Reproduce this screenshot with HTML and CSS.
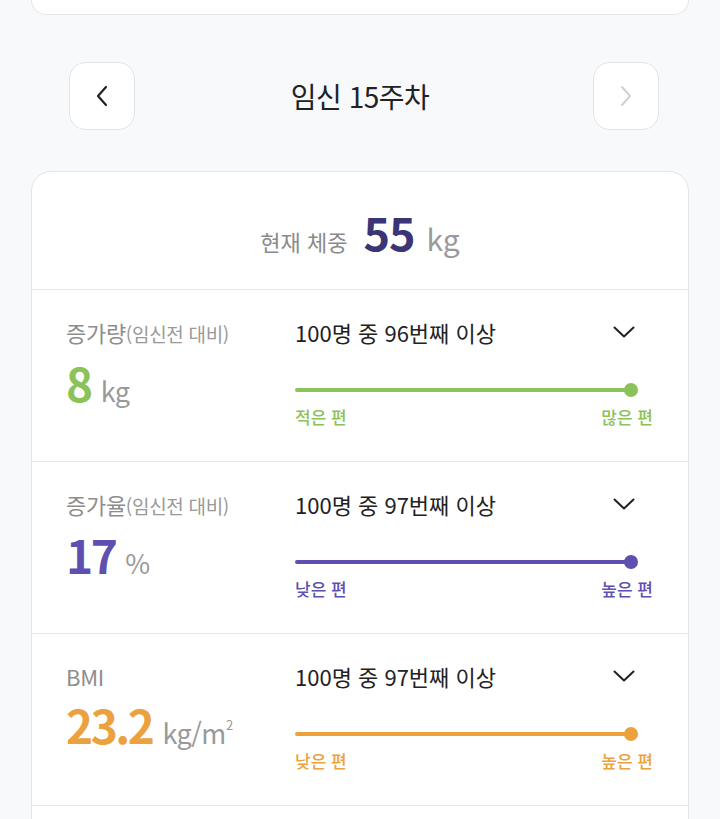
FILE: index.html
```html
<!DOCTYPE html>
<html lang="ko">
<head>
<meta charset="utf-8">
<title>임신 15주차</title>
<link rel="stylesheet" href="styles.css">
</head>
<body>
<div class="page">
  <div class="top-card"></div>

  <div class="week-nav">
    <button class="nav-btn" aria-label="이전">
      <svg width="14" height="22" viewBox="0 0 14 22"><path d="M11 2 L3 11 L11 20" fill="none" stroke="#222" stroke-width="2.2" stroke-linecap="round" stroke-linejoin="round"/></svg>
    </button>
    <div class="week-title">임신 15주차</div>
    <button class="nav-btn disabled" aria-label="다음">
      <svg width="14" height="22" viewBox="0 0 14 22"><path d="M3 2 L11 11 L3 20" fill="none" stroke="#cfd1d4" stroke-width="2" stroke-linecap="round" stroke-linejoin="round"/></svg>
    </button>
  </div>

  <div class="card">
    <div class="current">
      <span class="current-label">현재 체중</span>
      <span class="current-value">55</span>
      <span class="current-unit">kg</span>
    </div>

    <div class="row green">
      <div class="left">
        <div class="label">증가량<small>(임신전 대비)</small></div>
        <div class="value"><b>8</b><span class="unit">kg</span></div>
      </div>
      <div class="right">
        <div class="rank">
          <span>100명 중 96번째 이상</span>
          <svg class="chev" width="22" height="12" viewBox="0 0 22 12"><path d="M1.5 1.5 L11 10.5 L20.5 1.5" fill="none" stroke="#222" stroke-width="2" stroke-linecap="round" stroke-linejoin="round"/></svg>
        </div>
        <div class="bar"><div class="line"></div><div class="dot"></div></div>
        <div class="ends"><span>적은 편</span><span>많은 편</span></div>
      </div>
    </div>

    <div class="row purple">
      <div class="left">
        <div class="label">증가율<small>(임신전 대비)</small></div>
        <div class="value"><b>17</b><span class="unit">%</span></div>
      </div>
      <div class="right">
        <div class="rank">
          <span>100명 중 97번째 이상</span>
          <svg class="chev" width="22" height="12" viewBox="0 0 22 12"><path d="M1.5 1.5 L11 10.5 L20.5 1.5" fill="none" stroke="#222" stroke-width="2" stroke-linecap="round" stroke-linejoin="round"/></svg>
        </div>
        <div class="bar"><div class="line"></div><div class="dot"></div></div>
        <div class="ends"><span>낮은 편</span><span>높은 편</span></div>
      </div>
    </div>

    <div class="row orange">
      <div class="left">
        <div class="label">BMI</div>
        <div class="value"><b>23.2</b><span class="unit">kg/m<sup>2</sup></span></div>
      </div>
      <div class="right">
        <div class="rank">
          <span>100명 중 97번째 이상</span>
          <svg class="chev" width="22" height="12" viewBox="0 0 22 12"><path d="M1.5 1.5 L11 10.5 L20.5 1.5" fill="none" stroke="#222" stroke-width="2" stroke-linecap="round" stroke-linejoin="round"/></svg>
        </div>
        <div class="bar"><div class="line"></div><div class="dot"></div></div>
        <div class="ends"><span>낮은 편</span><span>높은 편</span></div>
      </div>
    </div>

    <div class="row empty"></div>
  </div>
</div>
</body>
</html>
```

FILE: styles.css
```css
* { box-sizing: border-box; }
html, body {
  margin: 0;
  padding: 0;
  background: #f7f9fb;
}
body {
  font-family: "Noto Sans CJK KR", "Noto Sans", sans-serif;
  color: #222;
}
.page {
  padding: 0 31px;
}
.top-card {
  height: 15px;
  background: #fff;
  border: 1px solid #e3e5e8;
  border-top: none;
  border-radius: 0 0 20px 20px;
}
.week-nav {
  display: grid;
  grid-template-columns: 66px 1fr 66px;
  align-items: center;
  margin: 47px 30px 0 38px;
}
.nav-btn {
  width: 66px;
  height: 68px;
  background: #fff;
  border: 1px solid #e2e4e7;
  border-radius: 17px;
  display: flex;
  align-items: center;
  justify-content: center;
  padding: 0;
}
.week-title {
  text-align: center;
  font-size: 28px;
  line-height: 36px;
  letter-spacing: -0.5px;
  color: #222;
  padding-right: 8px;
}
.card {
  margin-top: 41px;
  background: #fff;
  border: 1px solid #e3e5e8;
  border-radius: 20px;
}
.current {
  height: 117px;
  display: flex;
  justify-content: center;
  align-items: baseline;
  padding-top: 37px;
}
.current-label {
  font-size: 22px;
  color: #8a8a8a;
  margin-right: 16px;
}
.current-value {
  font-size: 45px;
  font-weight: 700;
  color: #3b3475;
  line-height: 1;
  letter-spacing: -1px;
  margin-right: 12px;
}
.current-unit {
  font-size: 30px;
  color: #9a9a9a;
}
.row {
  border-top: 1px solid #e6e8ea;
  height: 172px;
  display: grid;
  grid-template-columns: 229px 1fr;
  padding: 27px 35px 0 34px;
}
.row.empty { height: 60px; }
.label {
  font-size: 22px;
  line-height: 30px;
  color: #8d8d8d;
  letter-spacing: -0.3px;
}
.label small {
  font-size: 19px;
  color: #999;
}
.value {
  margin-top: 8px;
  display: flex;
  align-items: baseline;
  line-height: 50px;
}
.value b {
  font-size: 46px;
  font-weight: 700;
  letter-spacing: -2.5px;
  margin-right: 10px;
}
.unit {
  font-size: 27px;
  color: #999;
  letter-spacing: -0.5px;
}
.unit sup {
  font-size: 13px;
  vertical-align: 14px;
}
.rank {
  display: flex;
  justify-content: space-between;
  align-items: center;
  font-size: 22px;
  line-height: 30px;
  color: #222;
  padding-right: 18px;
}
.bar {
  display: flex;
  align-items: center;
  margin-top: 36px;
  margin-right: 15px;
  height: 14px;
}
.line {
  flex: 1;
  height: 4px;
  border-radius: 2px;
  margin-right: -7px;
}
.dot {
  width: 14px;
  height: 14px;
  border-radius: 50%;
}
.ends {
  display: flex;
  justify-content: space-between;
  font-size: 17px;
  font-weight: 500;
  line-height: 24px;
  margin-top: 8px;
}
.green .value b, .green .ends { color: #8bc25a; }
.green .line, .green .dot { background: #8bc25a; }
.purple .value b, .purple .ends { color: #5e4fb0; }
.purple .line, .purple .dot { background: #5e4fb0; }
.orange .value b, .orange .ends { color: #eba23e; }
.orange .line, .orange .dot { background: #eba23e; }
```
